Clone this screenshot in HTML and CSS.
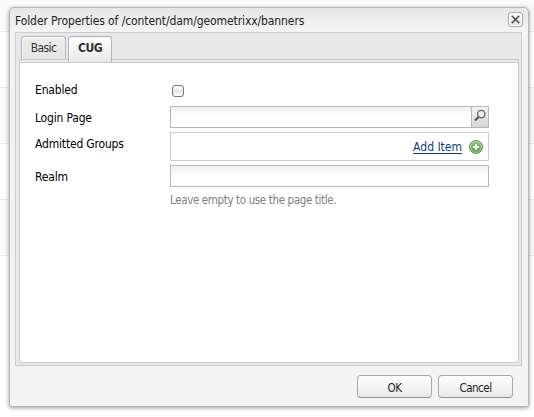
FILE: index.html
```html
<!DOCTYPE html>
<html lang="en">
<head>
<meta charset="utf-8">
<title>Folder Properties</title>
<link rel="stylesheet" href="styles.css">
</head>
<body>
<main class="dialog">
  <header class="titlebar">
    <span class="title">Folder Properties of /content/dam/geometrixx/banners</span>
    <button class="close" aria-label="Close"><svg width="15" height="15" viewBox="0 0 15 15"><path d="M3.7 3.7l7.6 7.6M11.3 3.7l-7.6 7.6" stroke="#484848" stroke-width="1.4"/></svg></button>
  </header>
  <section class="panel">
    <nav class="tabs">
      <span class="tab">Basic</span>
      <span class="tab active">CUG</span>
    </nav>
    <div class="spacer"></div>
    <div class="form">
      <div class="row enabled"><label>Enabled</label><span class="check"></span></div>
      <div class="row login"><label>Login Page</label>
        <div class="field"><span class="trigger"><svg width="16" height="20" viewBox="0 0 16 20"><circle cx="9.3" cy="7.1" r="3.7" fill="#ededed" stroke="#666" stroke-width="1.3"/><path d="M6.6 9.9L3 13.6" stroke="#555" stroke-width="2.1"/></svg></span></div></div>
      <div class="row groups"><label>Admitted Groups</label>
        <div class="list"><a class="add">Add Item</a><svg width="14" height="14" viewBox="0 0 14 14"><defs><linearGradient id="green" x2="0" y2="1"><stop stop-color="#91ca80"/><stop offset="1" stop-color="#4d9c3c"/></linearGradient></defs><circle cx="7" cy="7" r="6.5" fill="url(#green)" stroke="#5b9d4e"/><circle cx="7" cy="7" r="5.4" fill="none" stroke="#b4dba8" stroke-width=".8"/><path d="M7 4v6M4 7h6" stroke="#fff" stroke-width="2"/></svg></div></div>
      <div class="row realm"><label>Realm</label><div class="field"></div></div>
      <p class="hint">Leave empty to use the page title.</p>
    </div>
  </section>
  <footer class="actions"><button class="btn">OK</button><button class="btn">Cancel</button></footer>
</main>
</body>
</html>
```
FILE: styles.css
```css
* { box-sizing: border-box; }
body {
  margin: 0;
  padding: 7px 0 0 9px;
  height: 417px;
  overflow: hidden;
  font: 12px/16px "DejaVu Sans Condensed", "DejaVu Sans", sans-serif;
  font-stretch: condensed;
  color: #000;
  background: linear-gradient(#fafafa 31px, #e8e8e8 31px 32px, #fff 32px 87px, #e8e8e8 87px 88px, #fafafa 88px 143px, #e8e8e8 143px 144px, #fff 144px 199px, #e8e8e8 199px 200px, #fafafa 200px 255px, #e8e8e8 255px 256px, #fff 256px);
}
svg { display: block; }
button { font: inherit; padding: 0; }
.dialog {
  width: 520px;
  height: 400px;
  border: 1px solid #b5b5b5;
  border-radius: 5px 5px 2px 2px;
  background: linear-gradient(#e6e6e6, #f3f3f3 22px);
  box-shadow: 0 1px 4px rgba(0, 0, 0, .38);
  padding: 0 6px 0 5px;
}
.titlebar { height: 24px; display: flex; justify-content: space-between; padding-top: 4px; color: #222; }
.title { letter-spacing: -.09px; padding-top: 1px; }
.close { width: 15px; height: 15px; margin-right: -1px; border: 0; border-radius: 3px; background: linear-gradient(#fff, #ddd); box-shadow: inset 0 0 0 1px #aaa, inset 0 0 0 2px #fff; }
.panel { width: 507px; height: 334px; border: 1px solid #ccc; background: #e8e8e8; padding: 3px 2px 3px 3px; }
.tabs { height: 23px; display: flex; gap: 2px; padding-left: 2px; }
.tab { width: 45px; height: 23px; border: 1px solid #b5b5b5; border-bottom: 0; border-radius: 3px 3px 0 0; background: linear-gradient(#ededed, #e4e4e4); text-align: center; line-height: 22px; letter-spacing: -.6px; box-shadow: inset 1px 1px #f6f6f6; color: #333; }
.tab.active { width: 44px; height: 26px; z-index: 1; background: linear-gradient(#fff, #e8e8e8); font-weight: bold; letter-spacing: -.5px; }
.spacer { height: 3px; border: solid #ccc; border-width: 1px 1px 0; }
.form { height: 301px; border: 1px solid #ccc; background: #fff; padding: 14px 29px 0 15px; }
.row { display: flex; align-items: flex-start; }
label { width: 135px; white-space: nowrap; margin-top: 4px; letter-spacing: -.18px; }
.enabled { height: 29px; }
.enabled label { margin-top: 5px; }
.check { width: 12px; height: 12px; margin: 8px 0 0 2px; border: 1px solid #777; border-radius: 3px; background: linear-gradient(#fff, #e6e6e6 55%, #fff); }
.login { height: 26px; }
.groups { height: 33px; }
.realm { height: 26px; }
.field { width: 319px; height: 22px; border: 1px solid #b5b8b8; background: linear-gradient(#eceff0, #fff 9px); }
.trigger { display: block; width: 17px; height: 20px; margin-left: auto; border-left: 1px solid #b5b8b8; background: linear-gradient(#f2f2f2, #d6d6d6); }
.list { width: 319px; height: 29px; border: 1px solid #ccc; display: flex; justify-content: flex-end; align-items: center; padding-right: 5px; gap: 7px; }
.add { color: #153a80; text-decoration: underline; text-underline-offset: 2px; padding-top: 1px; }
.hint { margin: 1px 0 0; padding-left: 135px; color: #808080; font-size: 11.5px; letter-spacing: -.37px; }
.actions { display: flex; justify-content: flex-end; gap: 6px; padding: 9px 9px 0 0; }
.btn { width: 75px; height: 23px; padding-top: 2px; border: 1px solid #aaa; border-bottom-color: #8e8e8e; border-radius: 4px; background: linear-gradient(#fff, #e8e8e8); color: #222; font-size: 11.5px; letter-spacing: -.5px; }
```
